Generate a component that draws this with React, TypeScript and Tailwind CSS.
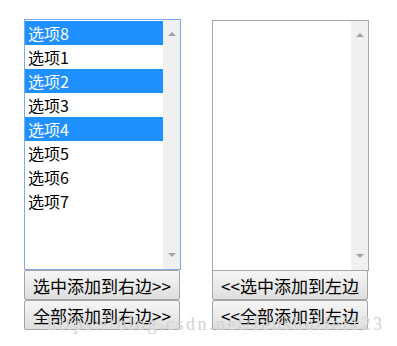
const font = { fontFamily: '"Microsoft YaHei", "Noto Sans CJK SC", sans-serif' };

const leftOptions = [
  { label: '选项8', selected: true },
  { label: '选项1', selected: false },
  { label: '选项2', selected: true },
  { label: '选项3', selected: false },
  { label: '选项4', selected: true },
  { label: '选项5', selected: false },
  { label: '选项6', selected: false },
  { label: '选项7', selected: false },
];

const Scrollbar = () => (
  <div className="w-[17px] bg-[#f0f0f0] flex flex-col items-center justify-between py-[12px]">
    <div className="w-0 h-0 border-x-[4px] border-x-transparent border-b-[4px] border-b-[#a3a3a3]" />
    <div className="w-0 h-0 border-x-[4px] border-x-transparent border-t-[4px] border-t-[#a3a3a3]" />
  </div>
);

const ListBox = ({
  options,
  focused,
}: {
  options: { label: string; selected: boolean }[];
  focused: boolean;
}) => (
  <div
    className={`flex h-[251px] w-[157px] bg-white border ${
      focused ? 'border-[#7fa7ea]' : 'border-[#a9a9a9]'
    }`}
  >
    <div className="flex-1 pt-[1px]">
      {options.map((o, i) => (
        <div
          key={i}
          className={`h-[24px] pl-[3px] text-[16px] leading-[24px] ${
            o.selected ? 'bg-[#1e90ff] text-white' : 'text-black'
          }`}
        >
          {o.label}
        </div>
      ))}
    </div>
    <Scrollbar />
  </div>
);

const Btn = ({ label }: { label: string }) => (
  <button className="h-[30px] w-[156px] border border-[#a5a5a5] rounded-[2px] bg-gradient-to-b from-[#f6f6f6] to-[#dedede] text-[17px] leading-none text-black whitespace-nowrap">
    {label}
  </button>
);

export default function App() {
  return (
    <div className="relative w-[397px] h-[346px] bg-white" style={font}>
      <div className="flex gap-[31px] pl-[24px] pt-[19px]">
        <div className="flex flex-col">
          <ListBox options={leftOptions} focused />
          <Btn label="选中添加到右边>>" />
          <Btn label="全部添加到右边>>" />
        </div>
        <div className="flex flex-col pt-[1px]">
          <div className="h-[250px]">
            <ListBox options={[]} focused={false} />
          </div>
          <Btn label="<<选中添加到左边" />
          <Btn label="<<全部添加到左边" />
        </div>
      </div>
      <div
        className="absolute left-[47px] top-[315px] text-[18px] leading-none tracking-[2.5px] text-[#d2d2d2] whitespace-nowrap pointer-events-none"
        style={{ fontFamily: '"Liberation Serif", serif' }}
      >
        https://blog.csdn.net/fenshuifei123
      </div>
    </div>
  );
}
